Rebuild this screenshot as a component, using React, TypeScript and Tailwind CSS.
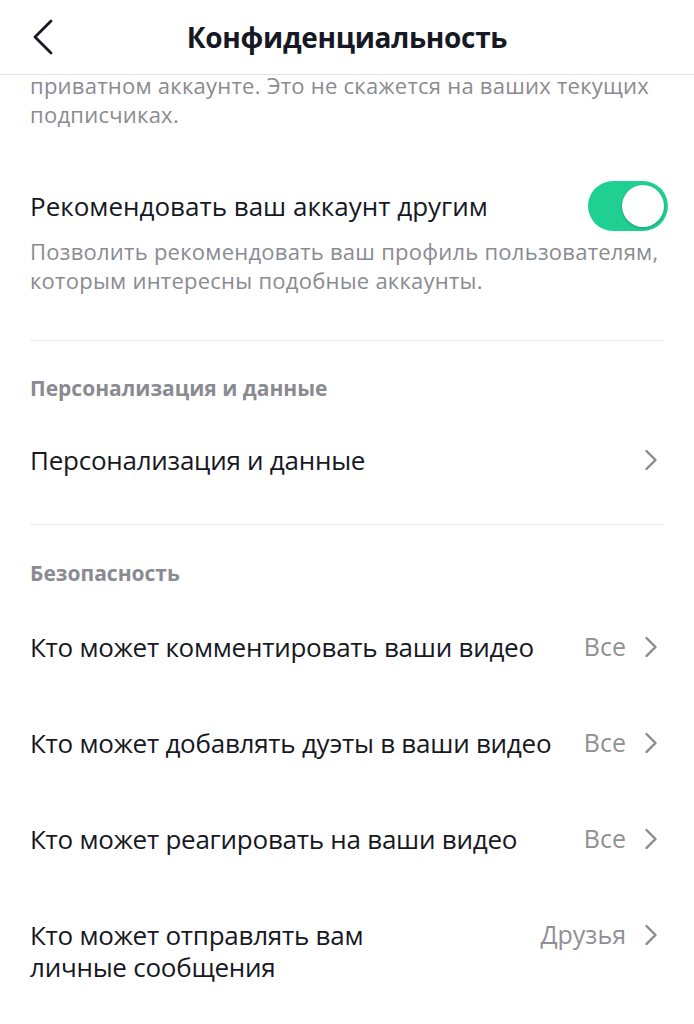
const font = { fontFamily: '"Open Sans", Lato, sans-serif' };

function Chevron() {
  return (
    <svg width="14" height="22" viewBox="0 0 14 22" fill="none" aria-hidden>
      <path d="M2.5 2l9 9-9 9" stroke="#8a8b91" strokeWidth="2.4" strokeLinecap="round" strokeLinejoin="round" />
    </svg>
  );
}

function Row({ lines, value }: { lines: string[]; value?: string }) {
  return (
    <div className="flex min-h-[96px] items-start justify-between pt-[32px]">
      <div className="flex flex-col">
        {lines.map((l) => (
          <span key={l} className="block text-[26px] leading-[32px] tracking-[-0.25px] text-[#161823]">
            {l}
          </span>
        ))}
      </div>
      <div className="mr-[6px] flex h-[32px] items-center gap-[18px]">
        {value && <span className="text-[25px] text-[#8f9096]">{value}</span>}
        <Chevron />
      </div>
    </div>
  );
}

export default function App() {
  return (
    <div className="flex h-[1024px] w-[694px] flex-col overflow-hidden bg-white" style={font}>
      <header className="relative z-10 flex h-[75px] shrink-0 items-center justify-center border-b border-[#e3e3e4] bg-white">
        <svg
          className="absolute left-[30px] top-[19px]"
          width="26"
          height="36"
          viewBox="0 0 26 36"
          fill="none"
          aria-hidden
        >
          <path d="M21 2L5 18l16 16" stroke="#161823" strokeWidth="2.8" strokeLinecap="round" strokeLinejoin="round" />
        </svg>
        <h1 className="text-[28px] font-bold tracking-[-0.3px] text-[#161823]">
          Конфиденциальность
        </h1>
      </header>

      <main className="-mt-[4px] px-[30px]">
        <p className="text-[22px] leading-[29px] tracking-[0.25px] text-[#8a8b91]">
          приватном аккаунте. Это не скажется на ваших текущих подписчиках.
        </p>

        <div className="mt-[52px] flex items-center justify-between">
          <span className="text-[26px] leading-[32px] text-[#161823]">
            Рекомендовать ваш аккаунт другим
          </span>
          <div className="mr-[-4px] flex h-[50px] w-[80px] items-center justify-end rounded-full bg-[#20d093] p-[4px]">
            <div className="h-[42px] w-[42px] rounded-full bg-white shadow-[0_1px_3px_rgba(0,0,0,0.25)]" />
          </div>
        </div>
        <p className="mt-[6px] text-[22px] leading-[29px] tracking-[0.25px] text-[#8a8b91]">
          Позволить рекомендовать ваш профиль пользователям, которым интересны подобные аккаунты.
        </p>

        <div className="mt-[45px] h-px bg-[#e8e8e9]" />

        <h2 className="mt-[33px] text-[21px] font-bold leading-[28px] text-[#8a8b91]">
          Персонализация и данные
        </h2>
        <div className="mt-[10px]">
          <Row lines={['Персонализация и данные']} />
        </div>
        <div className="mt-[16px] h-px bg-[#e8e8e9]" />

        <h2 className="mt-[34px] text-[21px] font-bold leading-[28px] text-[#8a8b91]">
          Безопасность
        </h2>
        <div className="mt-[12px]">
          <Row lines={['Кто может комментировать ваши видео']} value="Все" />
          <Row lines={['Кто может добавлять дуэты в ваши видео']} value="Все" />
          <Row lines={['Кто может реагировать на ваши видео']} value="Все" />
          <Row lines={['Кто может отправлять вам', 'личные сообщения']} value="Друзья" />
        </div>
      </main>
    </div>
  );
}
